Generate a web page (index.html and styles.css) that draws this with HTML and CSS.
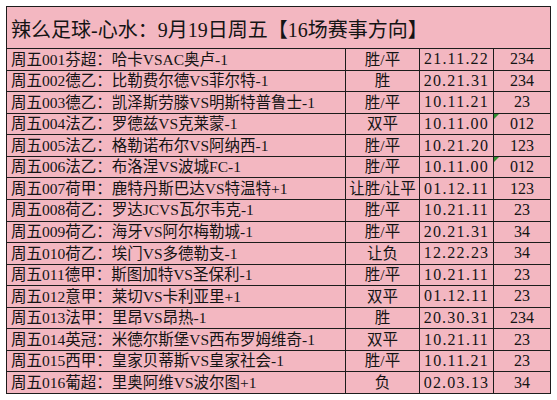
FILE: index.html
```html
<!DOCTYPE html>
<html lang="zh-CN">
<head>
<meta charset="utf-8">
<title>辣么足球-心水</title>
<link rel="stylesheet" href="styles.css">
</head>
<body>
<div class="sheet">
  <div class="title">辣么足球-心水：9月19日周五【16场赛事方向】</div>

  <div class="match">周五001芬超：哈卡VSAC奥卢-1</div><div class="pick">胜/平</div><div class="odds">21.11.22</div><div class="goals">234</div>
  <div class="match">周五002德乙：比勒费尔德VS菲尔特-1</div><div class="pick">胜</div><div class="odds">20.21.31</div><div class="goals">234</div>
  <div class="match">周五003德乙：凯泽斯劳滕VS明斯特普鲁士-1</div><div class="pick">胜/平</div><div class="odds">10.11.21</div><div class="goals">23</div>
  <div class="match">周五004法乙：罗德兹VS克莱蒙-1</div><div class="pick">双平</div><div class="odds">10.11.00</div><div class="goals flag">012</div>
  <div class="match">周五005法乙：格勒诺布尔VS阿纳西-1</div><div class="pick">胜/平</div><div class="odds">10.21.20</div><div class="goals">123</div>
  <div class="match">周五006法乙：布洛涅VS波城FC-1</div><div class="pick">胜/平</div><div class="odds">10.11.00</div><div class="goals flag">012</div>
  <div class="match">周五007荷甲：鹿特丹斯巴达VS特温特+1</div><div class="pick">让胜/让平</div><div class="odds">01.12.11</div><div class="goals">123</div>
  <div class="match">周五008荷乙：罗达JCVS瓦尔韦克-1</div><div class="pick">胜/平</div><div class="odds">10.21.11</div><div class="goals">23</div>
  <div class="match">周五009荷乙：海牙VS阿尔梅勒城-1</div><div class="pick">胜/平</div><div class="odds">20.21.31</div><div class="goals">34</div>
  <div class="match">周五010荷乙：埃门VS多德勒支-1</div><div class="pick">让负</div><div class="odds">12.22.23</div><div class="goals">34</div>
  <div class="match">周五011德甲：斯图加特VS圣保利-1</div><div class="pick">胜/平</div><div class="odds">10.21.11</div><div class="goals">23</div>
  <div class="match">周五012意甲：莱切VS卡利亚里+1</div><div class="pick">双平</div><div class="odds">01.12.11</div><div class="goals">23</div>
  <div class="match">周五013法甲：里昂VS昂热-1</div><div class="pick">胜</div><div class="odds">20.30.31</div><div class="goals">234</div>
  <div class="match">周五014英冠：米德尔斯堡VS西布罗姆维奇-1</div><div class="pick">双平</div><div class="odds">10.21.11</div><div class="goals">23</div>
  <div class="match">周五015西甲：皇家贝蒂斯VS皇家社会-1</div><div class="pick">胜/平</div><div class="odds">10.11.21</div><div class="goals">23</div>
  <div class="match">周五016葡超：里奥阿维VS波尔图+1</div><div class="pick">负</div><div class="odds">02.03.13</div><div class="goals">34</div>
</div>
</body>
</html>
```

FILE: styles.css
```css
html, body {
  margin: 0;
  padding: 0;
  background: #ffffff;
}

body {
  padding: 6px;
  font-family: "Liberation Serif", "Noto Sans CJK SC", serif;
  color: #141414;
}

.sheet {
  box-sizing: border-box;
  width: 545px;
  height: 388px;
  display: grid;
  grid-template-columns: 338px 73px 73px 56px;
  grid-template-rows: 41px repeat(16, 1fr);
  gap: 1px;
  padding: 1px;
  background: #1c1c1c;
}

.sheet > div {
  background: #f3b7c1;
  display: flex;
  align-items: center;
  font-size: 15.5px;
  line-height: 1;
  white-space: nowrap;
  overflow: hidden;
}

.sheet > .title {
  grid-column: 1 / -1;
  font-size: 20px;
  padding: 5px 0 0 4px;
}

.match {
  padding-left: 4px;
}

.pick,
.odds,
.goals {
  justify-content: center;
}

.sheet > .odds {
  font-size: 16px;
  letter-spacing: 1.2px;
}

.sheet > .goals {
  position: relative;
  font-size: 16px;
}

.goals.flag::before {
  content: "";
  position: absolute;
  left: 0;
  top: 0;
  border-top: 5px solid #2f8f2f;
  border-right: 5px solid transparent;
}
```
